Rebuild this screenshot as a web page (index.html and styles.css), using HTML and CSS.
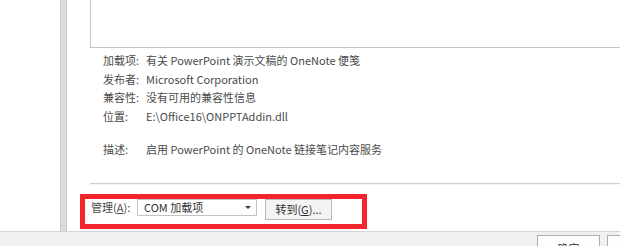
FILE: index.html
```html
<!DOCTYPE html>
<html lang="zh-CN">
<head>
    <meta charset="UTF-8">
    <title>加载项</title>
    <link rel="stylesheet" href="styles.css">
</head>
<body>
    <div class="window">
        <div class="main">
            <div class="side"></div>
            <div class="strip"></div>
            <div class="panel">
                <div class="list"></div>
                <div class="details">
                    <span class="label">加载项:</span><span>有关 PowerPoint 演示文稿的 OneNote 便笺</span>
                    <span class="label">发布者:</span><span>Microsoft Corporation</span>
                    <span class="label">兼容性:</span><span>没有可用的兼容性信息</span>
                    <span class="label">位置:</span><span>E:\Office16\ONPPTAddin.dll</span>
                    <span class="label gap">描述:</span><span class="gap">启用 PowerPoint 的 OneNote 链接笔记内容服务</span>
                </div>
                <div class="separator"></div>
                <div class="manage">
                    <span class="manage-label">管理(<u>A</u>):</span>
                    <div class="select">
                        <span>COM 加载项</span>
                        <span class="arrow"></span>
                    </div>
                    <button class="go-btn">转到(<u>G</u>)...</button>
                </div>
            </div>
        </div>
        <div class="footer">
            <button class="dlg-btn ok">确定</button>
            <button class="dlg-btn cancel"></button>
        </div>
    </div>
</body>
</html>
```

FILE: styles.css
```css
body, html {
    margin: 0;
    padding: 0;
    background-color: #ffffff;
    font-family: "Noto Sans CJK SC", "Noto Sans", sans-serif;
    font-size: 11px;
    color: #4a4a4a;
}

.window {
    width: 620px;
    height: 246px;
    overflow: hidden;
    display: flex;
    flex-direction: column;
}

.main {
    height: 231px;
    flex-shrink: 0;
    display: flex;
}

.side {
    width: 60px;
    background-color: #ffffff;
}

.strip {
    width: 5px;
    background-color: #dcdcdc;
    border-left: 1px solid #c8c8c8;
    border-right: 1px solid #c8c8c8;
}

.panel {
    flex: 1;
    padding-left: 23px;
    display: flex;
    flex-direction: column;
    overflow: hidden;
}

.list {
    height: 47px;
    flex-shrink: 0;
    margin-right: -10px;
    border: 1px solid #c6c6c6;
    border-top: none;
    background-color: #ffffff;
}

.details {
    display: grid;
    grid-template-columns: 43px auto;
    line-height: 18.5px;
    padding-left: 13px;
    padding-top: 3px;
}

.details .gap {
    margin-top: 15px;
}

.separator {
    height: 0;
    flex-shrink: 0;
    margin-top: 24px;
    margin-right: -10px;
    border-top: 1px solid #cfcfcf;
    border-bottom: 1px solid #f4f4f4;
}

.manage {
    flex-shrink: 0;
    margin-top: 9px;
    margin-left: -10px;
    width: 271px;
    height: 25px;
    border: 5px solid #f5262b;
    display: flex;
    align-items: flex-start;
    padding-left: 6px;
}

.manage-label {
    width: 46px;
    line-height: 17px;
}

.select {
    width: 120px;
    height: 17px;
    border: 1px solid #c3c3c3;
    display: flex;
    align-items: center;
    justify-content: space-between;
    padding: 0 5px 0 6px;
    box-sizing: border-box;
    color: #333333;
}

.arrow {
    width: 0;
    height: 0;
    border-left: 3px solid transparent;
    border-right: 3px solid transparent;
    border-top: 3px solid #333333;
}

.go-btn {
    margin-left: 8px;
    width: 67px;
    height: 21px;
    background-color: #f3f3f3;
    border: 1px solid #b9b9b9;
    font-family: inherit;
    font-size: 11px;
    color: #333333;
    padding: 0;
}

.footer {
    flex: 1;
    background-color: #f0f0f0;
    border-top: 1px solid #d6d6d6;
    display: flex;
    align-items: flex-start;
    padding-top: 3px;
    padding-left: 537px;
    gap: 7px;
}

.dlg-btn {
    width: 63px;
    height: 26px;
    flex-shrink: 0;
    background-color: #fdfdfd;
    border: 1px solid #adadad;
    font-family: inherit;
    font-size: 11px;
    color: #333333;
    padding: 0;
}
```
